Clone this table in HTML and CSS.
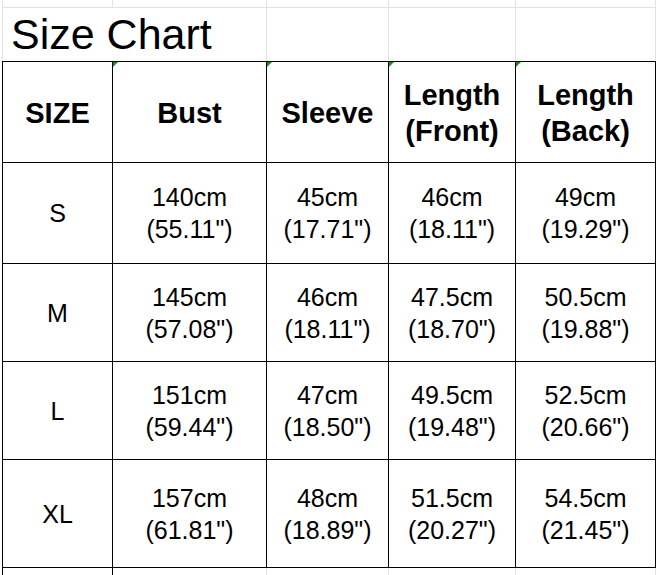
FILE: index.html
```html
<!DOCTYPE html>
<html>
<head>
<meta charset="utf-8">
<link rel="stylesheet" href="styles.css">
</head>
<body>
<div class="sheet">
  <div class="top">
    <div class="gc"></div><div class="gc"></div><div class="gc"></div><div class="gc"></div><div class="gc"></div>
    <div class="title">Size Chart</div>
    <div class="gc"></div><div class="gc"></div><div class="gc"></div>
  </div>
  <div class="chart">
    <div class="cell head">SIZE</div>
    <div class="cell head mark">Bust</div>
    <div class="cell head mark">Sleeve</div>
    <div class="cell head mark">Length<br>(Front)</div>
    <div class="cell head mark">Length<br>(Back)</div>

    <div class="cell">S</div>
    <div class="cell">140cm<br>(55.11")</div>
    <div class="cell">45cm<br>(17.71")</div>
    <div class="cell">46cm<br>(18.11")</div>
    <div class="cell">49cm<br>(19.29")</div>

    <div class="cell">M</div>
    <div class="cell">145cm<br>(57.08")</div>
    <div class="cell">46cm<br>(18.11")</div>
    <div class="cell">47.5cm<br>(18.70")</div>
    <div class="cell">50.5cm<br>(19.88")</div>

    <div class="cell">L</div>
    <div class="cell">151cm<br>(59.44")</div>
    <div class="cell">47cm<br>(18.50")</div>
    <div class="cell">49.5cm<br>(19.48")</div>
    <div class="cell">52.5cm<br>(20.66")</div>

    <div class="cell">XL</div>
    <div class="cell">157cm<br>(61.81")</div>
    <div class="cell">48cm<br>(18.89")</div>
    <div class="cell">51.5cm<br>(20.27")</div>
    <div class="cell">54.5cm<br>(21.45")</div>
  </div>
  <div class="tail">
    <div class="tc dark"></div><div class="tc dark"></div><div class="tc"></div><div class="tc"></div><div class="tc"></div><div class="tc last"></div>
  </div>
</div>
</body>
</html>
```
FILE: styles.css
```css
html, body {
  margin: 0;
  padding: 0;
  background: #ffffff;
}
.sheet {
  width: 657px;
  height: 575px;
  overflow: hidden;
  background: #ffffff;
  font-family: "Liberation Sans", Arial, sans-serif;
  color: #000000;
}
.top {
  margin-left: 2px;
  width: 654px;
  box-sizing: border-box;
  padding: 0 1px;
  display: grid;
  grid-template-columns: 109px 153px 121px 126px 139px;
  grid-template-rows: 7px 53px;
  gap: 1px;
  background: #e2e2e2;
}
.gc {
  background: #ffffff;
}
.title {
  grid-column: 1 / 3;
  background: #ffffff;
  font-size: 43px;
  line-height: 53px;
  padding-left: 8px;
  white-space: nowrap;
}
.chart {
  margin-left: 2px;
  width: 654px;
  box-sizing: border-box;
  padding: 1px;
  display: grid;
  grid-template-columns: 109px 153px 121px 126px 139px;
  grid-template-rows: 100px 100px 97px 97px 107px;
  gap: 1px;
  background: #000000;
}
.cell {
  background: #ffffff;
  display: flex;
  align-items: center;
  justify-content: center;
  text-align: center;
  font-size: 25px;
  line-height: 32px;
  position: relative;
}
.head {
  font-weight: bold;
  font-size: 29px;
  line-height: 36px;
  padding-top: 1px;
}
.mark::before {
  content: "";
  position: absolute;
  left: 0;
  top: 0;
  width: 0;
  height: 0;
  border-top: 5px solid #1e8c1e;
  border-right: 5px solid transparent;
}
.tail {
  margin-left: 2px;
  display: flex;
  height: 8px;
}
.tc {
  height: 8px;
  border-left: 1px solid #e2e2e2;
}
.tc:nth-child(1) { width: 109px; }
.tc:nth-child(2) { width: 153px; }
.tc:nth-child(3) { width: 121px; }
.tc:nth-child(4) { width: 126px; }
.tc:nth-child(5) { width: 139px; }
.tc.dark {
  border-left-color: #000000;
}
.tc.last {
  width: 1px;
}
```
